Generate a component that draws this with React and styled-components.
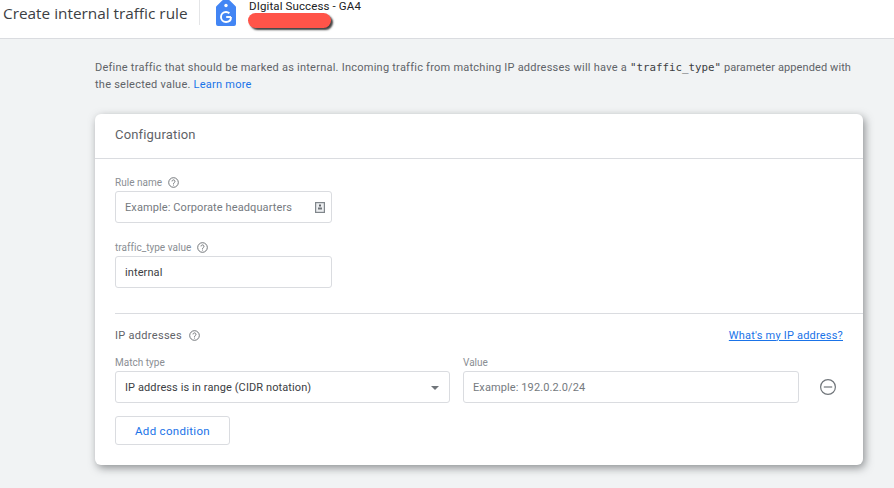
import React from "react";
import styled, { createGlobalStyle } from "styled-components";

const GlobalStyle = createGlobalStyle`
  html, body {
    margin: 0;
    padding: 0;
    background: #f1f3f4;
    font-family: Roboto, "Liberation Sans", sans-serif;
    overflow: hidden;
  }
`;

const Page = styled.div`
  width: 894px;
  height: 488px;
  overflow: hidden;
`;

// Header
const Header = styled.header`
  height: 38px;
  background: #fff;
  border-bottom: 1px solid #dadce0;
  display: flex;
  align-items: flex-start;
  padding-left: 3px;
`;

const PageTitle = styled.h1`
  margin: 0;
  width: 196px;
  height: 25px;
  border-right: 1px solid #e4e5e7;
  font-family: "Open Sans", sans-serif;
  font-size: 15.35px;
  font-weight: 400;
  line-height: 27px;
  color: #3c4043;
  white-space: nowrap;
`;

const TagIcon = styled.svg`
  display: block;
  width: 20px;
  height: 26px;
  margin-left: 16px;
`;

const Account = styled.div`
  position: relative;
  margin-left: 13px;
  font-size: 11.5px;
  letter-spacing: 0.12px;
  line-height: 13px;
  color: #202124;
  white-space: nowrap;
`;

const Redaction = styled.div`
  position: absolute;
  left: -1px;
  top: 13px;
  width: 83px;
  height: 15px;
  border-radius: 8px;
  background: #ff5449;
  box-shadow: 2px 2px 2px rgba(0, 0, 0, 0.75);
`;

// Body
const Content = styled.main`
  padding: 20px 31px 0 95px;
`;

const Intro = styled.p`
  margin: 0 0 21px;
  height: 34px;
  font-size: 11px;
  line-height: 17px;
  color: #5f6368;
  letter-spacing: 0.24px;
  white-space: nowrap;
`;

const Code = styled.code`
  font-family: "DejaVu Sans Mono", monospace;
  font-size: 10.8px;
  letter-spacing: 0;
  color: #3c4043;
`;

const IntroTail = styled.span`
  letter-spacing: 0.1px;
`;

const Link = styled.a`
  color: #1a73e8;
  text-decoration: none;
`;

const Card = styled.section`
  width: 768px;
  height: 351px;
  background: #fff;
  border-radius: 6px;
  box-shadow: 2px 3px 8px rgba(60, 64, 67, 0.55);
`;

const CardTitle = styled.h2`
  margin: 0;
  height: 44px;
  padding-left: 20px;
  border-bottom: 1px solid #dadce0;
  font-size: 13px;
  font-weight: 400;
  line-height: 42px;
  color: #5f6368;
  letter-spacing: 0.17px;
`;

const FormTop = styled.div`
  padding-top: 15px;
  margin-left: 20px;
  height: 139px;
  border-bottom: 1px solid #dadce0;
  margin-bottom: 13px;
  display: flex;
  flex-direction: column;
`;

const FieldLabel = styled.label`
  display: flex;
  align-items: center;
  gap: 6px;
  height: 16px;
  font-size: 10px;
  letter-spacing: 0.02px;
  color: #8a8e93;
`;

const Box = styled.div`
  box-sizing: border-box;
  width: ${(p) => p.$width}px;
  height: 32px;
  margin-top: 1px;
  margin-bottom: ${(p) => p.$gap || 0}px;
  padding: 1px 10px 0 9px;
  display: flex;
  align-items: center;
  justify-content: space-between;
  background: #fff;
  border: 1px solid #dadce0;
  border-radius: 3px;
  font-size: 11px;
  letter-spacing: 0.1px;
  color: ${(p) => (p.$placeholder ? "#757a80" : "#3c4043")};
  white-space: nowrap;
`;

const HelpSvg = styled.svg`
  display: block;
  width: 11px;
  height: 11px;
  flex: none;
`;

const HelpIcon = () => (
  <HelpSvg viewBox="0 0 24 24" fill="none" stroke="#5f6368" strokeWidth="1.9">
    <circle cx="12" cy="12" r="10.5" />
    <path d="M8.8 9.6a3.2 3.2 0 1 1 5 2.6c-1.1.8-1.8 1.3-1.8 2.8" />
    <path d="M12 16.6v2" />
  </HelpSvg>
);

const IdIcon = styled.svg`
  display: block;
  width: 10px;
  height: 11px;
  margin-right: -4px;
`;

const SectionRow = styled.div`
  display: flex;
  justify-content: space-between;
  align-items: center;
  height: 16px;
  padding: 0 20px 0 20px;
  margin-bottom: 11px;
`;

const SectionTitle = styled.div`
  display: flex;
  align-items: center;
  gap: 7px;
  font-size: 11px;
  letter-spacing: 0.3px;
  color: #5f6368;
`;

const IpLink = styled.a`
  color: #1a73e8;
  font-size: 11px;
  letter-spacing: 0.2px;
  text-decoration: underline;
`;

const ConditionRow = styled.div`
  display: flex;
  align-items: flex-end;
  gap: 13px;
  padding-left: 20px;
`;

const Column = styled.div`
  display: flex;
  flex-direction: column;
`;

const Caret = styled.span`
  width: 0;
  height: 0;
  border-left: 4px solid transparent;
  border-right: 4px solid transparent;
  border-top: 4px solid #70757a;
`;

const RemoveIcon = styled.svg`
  display: block;
  width: 18px;
  height: 18px;
  margin: 0 0 7px 7px;
`;

const AddButton = styled.button`
  display: block;
  box-sizing: border-box;
  width: 115px;
  height: 29px;
  margin: 13px 0 0 20px;
  padding: 1px 0 0;
  background: #fff;
  border: 1px solid #dadce0;
  border-radius: 3px;
  font-family: Roboto, sans-serif;
  font-size: 11.5px;
  font-weight: 400;
  letter-spacing: 0.3px;
  color: #1a73e8;
`;

const App = () => (
  <Page>
    <GlobalStyle />
    <Header>
      <PageTitle>Create internal traffic rule</PageTitle>
      <TagIcon viewBox="0 0 20 26">
        <path
          d="M7 0h6a1 1 0 0 1 .8.4l5.8 5.8c.3.3.4.6.4 1V24a2 2 0 0 1-2 2H2a2 2 0 0 1-2-2V7.2c0-.4.1-.7.4-1L6.2.4A1 1 0 0 1 7 0z"
          fill="#4285f4"
        />
        <circle cx="10" cy="5.5" r="1.7" fill="#fff" />
        <path
          d="M15 17c0 3-2 5-5 5a5 5 0 0 1 0-10c1.4 0 2.5.5 3.4 1.3"
          fill="none"
          stroke="#fff"
          strokeWidth="1.9"
        />
        <path d="M10.2 17H15" stroke="#fff" strokeWidth="1.9" />
      </TagIcon>
      <Account>
        DIgital Success - GA4
        <Redaction />
      </Account>
    </Header>
    <Content>
      <Intro>
        Define traffic that should be marked as internal. Incoming traffic from matching IP addresses will have a{" "}
        <Code>"traffic_type"</Code> <IntroTail>parameter appended with</IntroTail>
        <br />
        the selected value. <Link href="#">Learn more</Link>
      </Intro>
      <Card>
        <CardTitle>Configuration</CardTitle>
        <FormTop>
          <FieldLabel>
            Rule name <HelpIcon />
          </FieldLabel>
          <Box $width={217} $placeholder $gap={16}>
            Example: Corporate headquarters
            <IdIcon viewBox="0 0 10 11">
              <rect x="0.6" y="0.6" width="8.8" height="9.8" fill="#eceef0" stroke="#80868b" strokeWidth="1.2" />
              <rect x="4" y="2.5" width="2" height="2" fill="#5f6368" />
              <rect x="3" y="5.5" width="4" height="2" fill="#70757a" />
            </IdIcon>
          </Box>
          <FieldLabel>
            traffic_type value <HelpIcon />
          </FieldLabel>
          <Box $width={217}>internal</Box>
        </FormTop>
        <SectionRow>
          <SectionTitle>
            IP addresses <HelpIcon />
          </SectionTitle>
          <IpLink href="#">What's my IP address?</IpLink>
        </SectionRow>
        <ConditionRow>
          <Column>
            <FieldLabel>Match type</FieldLabel>
            <Box $width={335}>
              IP address is in range (CIDR notation)
              <Caret />
            </Box>
          </Column>
          <Column>
            <FieldLabel>Value</FieldLabel>
            <Box $width={336} $placeholder>
              Example: 192.0.2.0/24
            </Box>
          </Column>
          <RemoveIcon viewBox="0 0 18 18" fill="none" stroke="#70757a" strokeWidth="1.2">
            <circle cx="9" cy="9" r="7.4" />
            <path d="M4.8 9h8.4" />
          </RemoveIcon>
        </ConditionRow>
        <AddButton>Add condition</AddButton>
      </Card>
    </Content>
  </Page>
);

export default App;
